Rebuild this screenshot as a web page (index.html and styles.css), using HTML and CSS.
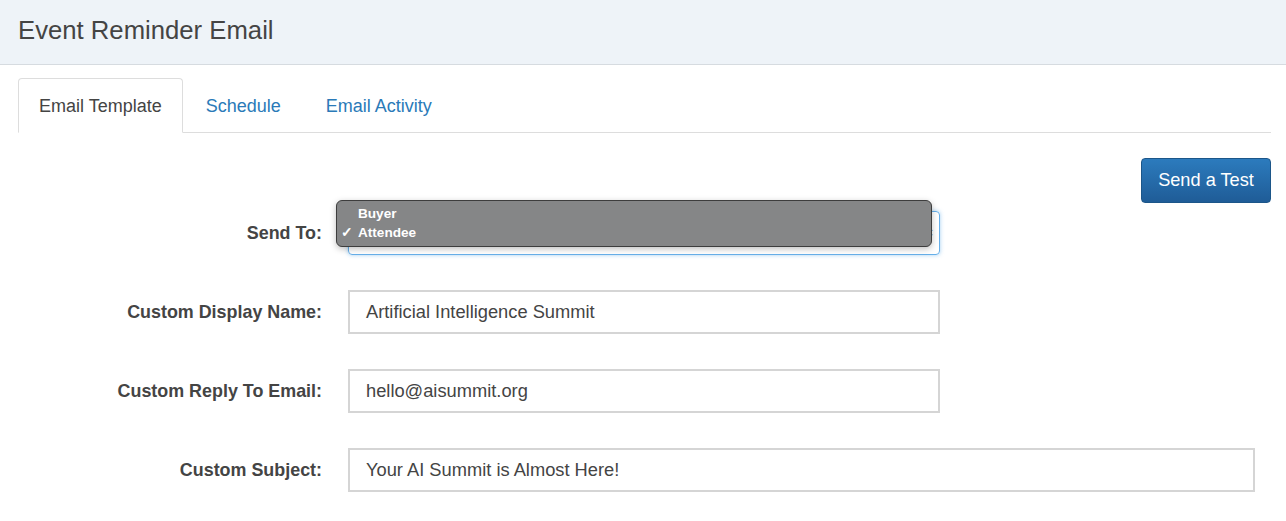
FILE: index.html
```html
<!DOCTYPE html>
<html>
<head>
<meta charset="utf-8">
<link rel="stylesheet" href="styles.css">
</head>
<body>
<header class="page-header">
  <h1 class="title">Event Reminder Email</h1>
</header>
<main class="content">
  <nav class="tabs">
    <a class="tab active">Email Template</a>
    <a class="tab">Schedule</a>
    <a class="tab">Email Activity</a>
  </nav>
  <div class="actions">
    <button class="btn-primary">Send a Test</button>
  </div>
  <form class="form">
    <label class="label">Send To:</label>
    <div class="field">
      <div class="select focused">
        <span class="select-arrows">&#8661;</span>
        <div class="dropdown">
          <div class="option"><span class="check"></span>Buyer</div>
          <div class="option"><span class="check">&#10003;</span>Attendee</div>
        </div>
      </div>
    </div>
    <label class="label">Custom Display Name:</label>
    <div class="field"><div class="input">Artificial Intelligence Summit</div></div>
    <label class="label">Custom Reply To Email:</label>
    <div class="field"><div class="input">hello@aisummit.org</div></div>
    <label class="label">Custom Subject:</label>
    <div class="field"><div class="input wide">Your AI Summit is Almost Here!</div></div>
  </form>
</main>
</body>
</html>
```
FILE: styles.css
```css
* { box-sizing: border-box; }
body {
  margin: 0;
  font-family: "Liberation Sans", Arial, sans-serif;
  color: #444;
  background: #fff;
}
.page-header {
  height: 65px;
  background: #eef3f8;
  border-bottom: 1px solid #d6dbe0;
  padding: 0 18px 3px;
  display: flex;
  align-items: center;
}
.title {
  margin: 0;
  font-size: 25.7px;
  font-weight: normal;
  color: #444;
}
.content {
  padding: 13px 15px 0 18px;
}
.tabs {
  display: flex;
  border-bottom: 1px solid #ddd;
  height: 55px;
}
.tab {
  display: flex;
  align-items: center;
  padding: 2px 21px 0;
  font-size: 18px;
  color: #2a7ab8;
  height: 55px;
  margin-right: 3px;
}
.tab.active {
  color: #444;
  border: 1px solid #ddd;
  border-bottom-color: #fff;
  border-radius: 4px 4px 0 0;
  background: #fff;
  height: 55px;
  padding: 2px 20px 0;
  margin-right: 2px;
}
.actions {
  display: flex;
  justify-content: flex-end;
  margin-top: 25px;
}
.btn-primary {
  height: 45px;
  width: 130px;
  border: 1px solid #1c5689;
  border-radius: 4px;
  background: linear-gradient(#2c7bbd, #1f5c97);
  color: #fff;
  font-family: "Liberation Sans", Arial, sans-serif;
  font-size: 18.2px;
  padding: 0;
}
.form {
  display: grid;
  grid-template-columns: 304px 1fr;
  column-gap: 26px;
  row-gap: 35px;
  margin-top: 8px;
  padding-right: 16px;
}
.label {
  display: flex;
  align-items: center;
  justify-content: flex-end;
  font-weight: bold;
  font-size: 17.9px;
  color: #444;
  height: 44px;
}
.field {
  height: 44px;
}
.input, .select {
  width: 592px;
  height: 44px;
  border: 2px solid #d5d5d5;
  font-size: 18.3px;
  color: #444;
  display: flex;
  align-items: center;
  padding-left: 16px;
}
.input.wide { width: 100%; }
.select {
  position: relative;
  border: 1px solid #66afe9;
  border-radius: 4px;
  box-shadow: 0 0 4px rgba(102, 175, 233, 0.6);
  justify-content: flex-end;
  padding-right: 4px;
}
.select-arrows {
  font-size: 12px;
  color: #888;
}
.dropdown {
  position: absolute;
  left: -13px;
  top: -12px;
  width: 596px;
  height: 47px;
  background: #858687;
  border: 1px solid #3d3d3d;
  border-radius: 6px;
  box-shadow: 0 2px 6px rgba(0, 0, 0, 0.25);
  padding-top: 3px;
  color: #fff;
  font-size: 13.6px;
  font-weight: bold;
}
.option {
  display: flex;
  align-items: center;
  height: 19px;
  line-height: 19px;
}
.check {
  display: inline-block;
  width: 21px;
  padding-left: 4px;
  font-size: 14px;
}
```
